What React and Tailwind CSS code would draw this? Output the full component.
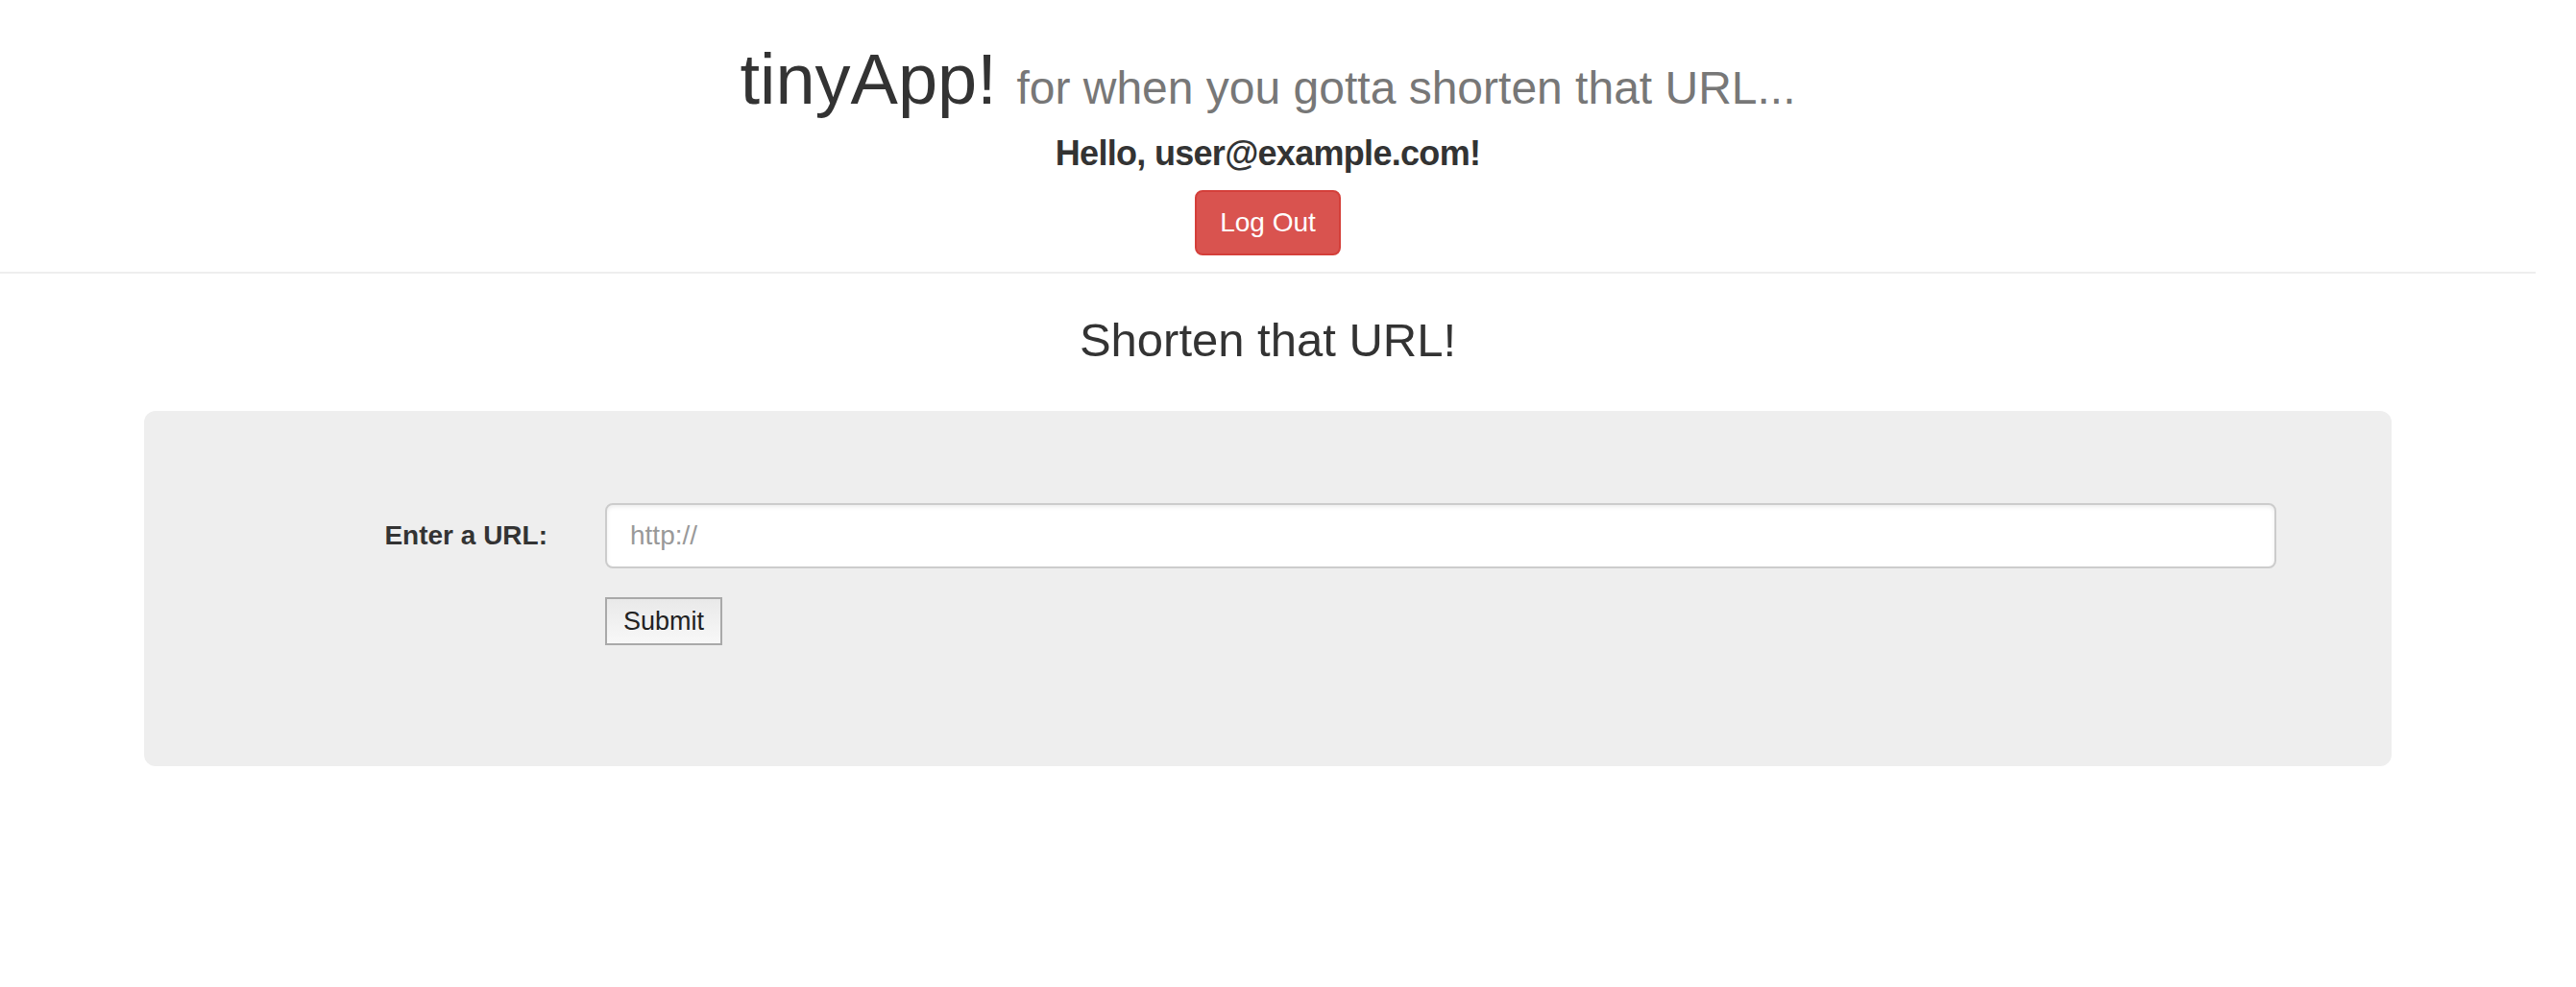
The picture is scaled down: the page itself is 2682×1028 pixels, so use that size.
import React from "react";

const FONT = { fontFamily: '"Liberation Sans", Arial, Helvetica, sans-serif' };

function Header() {
  return (
    <header className="border-b-2 border-[#eee] pb-[17px] pt-[43px] text-center">
      <h1 className="text-[74px] leading-[79px] font-normal text-[#333]">
        tinyApp! <small className="text-[48px] leading-none font-normal text-[#777]">for when you gotta shorten that URL...</small>
      </h1>
      <h4 className="mt-[18px] text-[36px] leading-[40px] font-bold tracking-[-0.7px] text-[#333]">Hello, user@example.com!</h4>
      <form className="mt-[18px] flex justify-center">
        <button
          type="button"
          className="h-[68px] w-[152px] rounded-[8px] border-2 border-[#d43f3a] bg-[#d9534f] text-[28px] leading-[40px] text-white"
        >
          Log Out
        </button>
      </form>
    </header>
  );
}

function UrlForm() {
  return (
    <form className="rounded-[12px] bg-[#eee] px-[120px] pb-[126px] pt-[96px]">
      <div className="flex items-start">
        <label htmlFor="longURL" className="w-[300px] shrink-0 pt-[14px] text-right text-[28px] leading-[40px] font-bold text-[#333]">
          Enter a URL:
        </label>
        <input
          id="longURL"
          type="text"
          placeholder="http://"
          className="ml-[60px] h-[68px] min-w-0 flex-1 rounded-[8px] border-2 border-[#ccc] bg-white px-[24px] text-[28px] text-[#555] shadow-[inset_0_2px_4px_rgba(0,0,0,0.075)] outline-none placeholder:text-[#999]"
        />
      </div>
      <div className="ml-[360px] mt-[30px]">
        <button
          type="button"
          className="h-[50px] w-[122px] border-2 border-[#a9a9a9] bg-gradient-to-b from-[#e9e9e9] to-[#f8f8f8] text-[27px] leading-[30px] text-[#222]"
        >
          Submit
        </button>
      </div>
    </form>
  );
}

export default function App() {
  return (
    <div className="min-h-[1028px] w-[2682px] bg-white text-[#333]" style={FONT}>
      <div className="w-[2640px]">
        <Header />
        <main className="mx-auto w-[2340px]">
          <h3 className="mt-[43px] text-center text-[49px] leading-[53px] font-normal text-[#333]">Shorten that URL!</h3>
          <div className="mt-[47px]">
            <UrlForm />
          </div>
        </main>
      </div>
    </div>
  );
}
